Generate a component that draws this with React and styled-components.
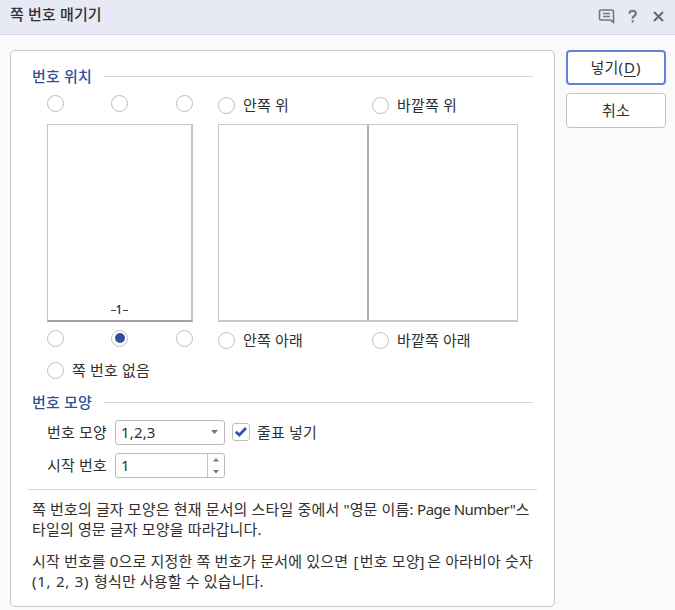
import React, { useState } from "react";
import styled, { createGlobalStyle } from "styled-components";

const GlobalStyle = createGlobalStyle`
  * { box-sizing: border-box; }
  body {
    margin: 0;
    background: #fafafa;
    color: #303030;
    font: 15px/20px "Noto Sans", "Noto Sans CJK KR", sans-serif;
  }
`;

const Dialog = styled.div`
  width: 675px;
  height: 610px;
  overflow: hidden;
  background: #fafafa;
`;

const TitleBar = styled.header`
  display: flex;
  justify-content: space-between;
  height: 35px;
  padding: 4px 11px 0 10px;
  background: #e7e9f4;
  border-bottom: 1px solid #cfd8ec;
`;

const Label = styled.span`
  display: block;
  white-space: pre;
  line-height: 20px;
  letter-spacing: 0.15px;
  font-weight: ${(p) => p.$weight || 400};
  color: ${(p) => p.$color || "inherit"};
`;

const Tracked = styled.span`
  letter-spacing: ${(p) => p.$by}px;
`;

const TitleActions = styled.div`
  display: flex;
  height: 22px;
  padding-top: 1px;
`;

const Body = styled.div`
  display: flex;
  align-items: flex-start;
  gap: 11px;
  padding: 15px 9px 0 10px;
`;

const Panel = styled.main`
  width: 545px;
  height: 557px;
  background: #fff;
  border: 1px solid #c8c8c8;
  border-radius: 5px;
  padding: 15px 17px 0;
`;

const SectionTitle = styled.div`
  display: flex;
  align-items: center;
  height: 20px;
  gap: 12px;
  padding: 0 4px;
  &::after {
    content: "";
    flex: 1;
    height: 1px;
    background: #d6d6d6;
  }
`;

const Heading = styled(Label)`
  width: 60px;
`;

const Positions = styled.div`
  display: grid;
  grid-template-columns: 146px 300px;
  column-gap: 25px;
  padding: 8px 0 0 19px;
`;

const Column = styled.div`
  display: flex;
  flex-direction: column;
`;

const DotRow = styled.div`
  display: grid;
  grid-template-columns: 64px 64.5px 17.5px;
  align-items: start;
  height: ${(p) => (p.$top ? 30 : 40)}px;
  padding-top: ${(p) => (p.$top ? 0.5 : 7.5)}px;
`;

const ChoiceRow = styled.div`
  display: grid;
  grid-template-columns: 154px 146px;
  height: ${(p) => (p.$top ? 30 : 38)}px;
  padding-top: ${(p) => (p.$top ? 1 : 8)}px;
`;

const Choice = styled.div`
  display: flex;
  align-items: center;
  gap: 8px;
  height: 20px;
`;

const ChoiceLabel = styled(Label)`
  padding-bottom: 1px;
`;

const Radio = styled.button`
  flex: none;
  display: grid;
  place-items: center;
  width: 17px;
  height: 17px;
  padding: 0;
  border: 1px solid #bebebe;
  border-radius: 50%;
  background: #fff;
  &::after {
    content: "";
    width: 10px;
    height: 10px;
    border-radius: 50%;
    background: ${(p) => (p.$on ? "#30519a" : "transparent")};
  }
`;

const Page = styled.div`
  display: flex;
  align-items: flex-end;
  justify-content: center;
  height: 198px;
  border: 1px solid #c6c6c6;
  border-right: 2px solid #c6c6c6;
  border-bottom: 2px solid #a2a2a2;
  font-size: 12px;
  line-height: 20px;
`;

const PageNumber = styled.span`
  display: flex;
  align-items: center;
  height: 20px;
  color: #333;
  font-weight: 500;
  &::before, &::after {
    content: "";
    width: 5px;
    height: 1px;
    background: #444;
  }
  &::after {
    margin-left: 1px;
  }
`;

const Spread = styled.div`
  display: grid;
  grid-template-columns: 150px 1fr;
  height: 198px;
  border: 1px solid #c8c8c8;
  border-bottom-width: 2px;
`;

const Leaf = styled.div`
  border-right: ${(p) => (p.$spine ? "2px solid #b2b2b2" : "0")};
`;

const NoneRow = styled.div`
  height: 32px;
  margin-top: -2px;
  padding-left: 19px;
`;

const FieldRow = styled.div`
  display: flex;
  align-items: center;
  height: 26px;
  margin-top: ${(p) => p.$gap}px;
  padding-left: 19px;
`;

const FieldLabel = styled(Label)`
  width: 68px;
`;

const Field = styled.div`
  display: flex;
  align-items: center;
  justify-content: space-between;
  width: 110px;
  height: 25px;
  padding-left: 5px;
  border: 1px solid #bcbcbc;
  border-radius: 3px;
  background: #fff;
`;

const FieldValue = styled(Label)`
  padding-bottom: 1px;
`;

const SelectArrow = styled.svg`
  margin-right: 6px;
`;

const Stepper = styled.div`
  display: flex;
  width: 17px;
  height: 23px;
  border-left: 1px solid #c4c4c4;
`;

const CheckBox = styled.button`
  display: grid;
  place-items: center;
  width: 18px;
  height: 18px;
  margin: 0 7px;
  padding: 0;
  border: 1px solid #c0c0c0;
  border-radius: 3px;
  background: #fff;
`;

const Divider = styled.hr`
  height: 1px;
  margin: 11px 0 9px;
  border: 0;
  background: #d6d6d6;
`;

const Note = styled.div`
  padding-left: 4px;
  margin-bottom: 12px;
`;

const NoteLine = styled(Label)`
  width: max-content;
`;

const Buttons = styled.aside`
  display: flex;
  flex-direction: column;
  gap: 8px;
`;

const Button = styled.button`
  display: flex;
  align-items: center;
  justify-content: center;
  width: 100px;
  height: 35px;
  padding: 0 0 2px;
  border: ${(p) => (p.$primary ? "2px solid #6482d5" : "1px solid #c2c2c2")};
  border-radius: 4px;
  background: #fff;
  color: #303030;
  font: inherit;
`;

const Mnemonic = styled.span`
  text-decoration: underline;
  text-underline-offset: 3px;
  text-decoration-thickness: 1px;
`;

const radioLabels = {
  top: [["inTop", "안쪽 위"], ["outTop", "바깥쪽 위"]],
  bottom: [["inBottom", "안쪽 아래"], ["outBottom", "바깥쪽 아래"]],
};

export default function App() {
  const [position, setPosition] = useState("bottomCenter");
  const [dashed, setDashed] = useState(true);
  const radio = (id) => (
    <Radio key={id} role="radio" aria-checked={position === id} $on={position === id} onClick={() => setPosition(id)} />
  );
  const choice = ([id, text]) => (
    <Choice key={id}>{radio(id)}<ChoiceLabel>{text}</ChoiceLabel></Choice>
  );

  return (
    <>
      <GlobalStyle />
      <Dialog>
        <TitleBar>
          <Label $weight={500}>쪽 번호 매기기</Label>
          <TitleActions>
            <svg width="66" height="22" viewBox="598 5 66 22" fill="none" stroke="#777" strokeWidth="1.6">
              <path d="M601 10h11q1.5 0 1.5 1.5v10.8l-3-2.3h-9.5q-1.5 0-1.5-1.5v-7q0-1.5 1.5-1.5zM603 13.5h7M603 16.5h7" strokeWidth="1.6" />
              <path d="M629.5 13.8q0-3 3.1-3 3.2 0 3.2 2.7 0 1.5-1.6 2.5-1.5.9-1.5 2.4M632.7 20.2v2.3" strokeWidth="2.1" />
              <path d="M654 12l9 9M663 12l-9 9" stroke="#686868" strokeWidth="2" />
            </svg>
          </TitleActions>
        </TitleBar>
        <Body>
          <Panel>
            <SectionTitle><Heading $weight={500} $color="#30519a">번호 위치</Heading></SectionTitle>
            <Positions>
              <Column>
                <DotRow $top>{["topLeft", "topCenter", "topRight"].map(radio)}</DotRow>
                <Page><PageNumber>1</PageNumber></Page>
                <DotRow>{["bottomLeft", "bottomCenter", "bottomRight"].map(radio)}</DotRow>
              </Column>
              <Column>
                <ChoiceRow $top>{radioLabels.top.map(choice)}</ChoiceRow>
                <Spread><Leaf $spine /><Leaf /></Spread>
                <ChoiceRow>{radioLabels.bottom.map(choice)}</ChoiceRow>
              </Column>
            </Positions>
            <NoneRow>{choice(["none", "쪽 번호 없음"])}</NoneRow>
            <SectionTitle><Heading $weight={500} $color="#30519a">번호 모양</Heading></SectionTitle>
            <FieldRow $gap={7}>
              <FieldLabel>번호 모양</FieldLabel>
              <Field>
                <FieldValue>1,2,3</FieldValue>
                <SelectArrow width="7" height="4" viewBox="0 0 7 4"><path d="M0 0h7L3.5 4z" fill="#777" /></SelectArrow>
              </Field>
              <CheckBox role="checkbox" aria-checked={dashed} onClick={() => setDashed(!dashed)}>
                {dashed && (
                  <svg width="14" height="12" viewBox="0 0 14 12"><path d="M1.8 5.8l3.5 3.2L12 2" fill="none" stroke="#3455a5" strokeWidth="2.9" /></svg>
                )}
              </CheckBox>
              <Label>줄표 넣기</Label>
            </FieldRow>
            <FieldRow $gap={7}>
              <FieldLabel>시작 번호</FieldLabel>
              <Field>
                <FieldValue>1</FieldValue>
                <Stepper>
                  <svg width="16" height="23" viewBox="0 0 16 23" fill="#777"><path d="M5 7.5h6L8 4zM5 16h6l-3 3.5z" /></svg>
                </Stepper>
              </Field>
            </FieldRow>
            <Divider />
            <Note>
              <NoteLine>쪽 번호의 글자 모양은 현재 문서의 스타일 중에서 "영문 이름:<Tracked $by={-0.5}> Page Number"</Tracked>스</NoteLine>
              <NoteLine>타일의 영문 글자 모양을 따라갑니다.</NoteLine>
            </Note>
            <Note>
              <NoteLine>시작 번호를 0으로 지정한 쪽 번호가 문서에 있으면<Tracked $by={1.4}> [</Tracked>번호 모양<Tracked $by={2.6}>]</Tracked>은 아라비아 숫자</NoteLine>
              <NoteLine><Tracked $by={0.75}>(1, 2, 3) </Tracked>형식만 사용할 수 있습니다.</NoteLine>
            </Note>
          </Panel>
          <Buttons>
            <Button $primary><Label>넣기<Tracked $by={1}>(<Mnemonic>D</Mnemonic>)</Tracked></Label></Button>
            <Button><Label>취소</Label></Button>
          </Buttons>
        </Body>
      </Dialog>
    </>
  );
}
